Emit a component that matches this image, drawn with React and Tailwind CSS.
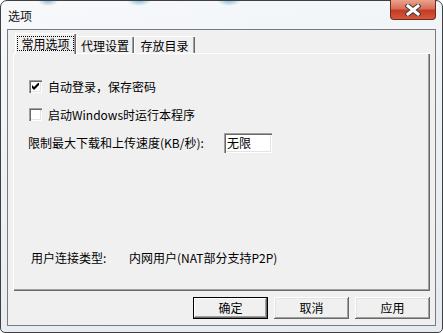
function CheckBox({ checked }) {
  return (
    <span className="flex h-[13px] w-[13px] shrink-0 items-center justify-center bg-white shadow-[inset_1px_1px_#a0a0a0,inset_2px_2px_#696969,inset_-1px_-1px_#fff,inset_-2px_-2px_#e3e3e3]">
      {checked && (
        <svg width="7" height="7" viewBox="0 0 7 7">
          <path d="M0 2v3l2 2 5-5V-1L2 4z" fill="#000" />
        </svg>
      )}
    </span>
  );
}

function Button({ label, primary }) {
  return (
    <button
      className={`flex h-[22px] w-[75px] items-center justify-center bg-[#f0f0f0] leading-[12px] ${
        primary
          ? 'border border-black shadow-[inset_-1px_-1px_#696969,inset_1px_1px_#fff,inset_-2px_-2px_#a0a0a0]'
          : 'shadow-[inset_-1px_-1px_#696969,inset_1px_1px_#fff,inset_-2px_-2px_#a0a0a0,inset_2px_2px_#e3e3e3]'
      }`}
    >
      {label}
    </button>
  );
}

export default function App() {
  return (
    <div className="h-[333px] w-[443px] font-['Noto_Sans_CJK_SC',sans-serif] text-[12px] text-black">
      <div className="flex h-full flex-col rounded-t-[7px] rounded-b-[5px] border border-[#3f3f3f] bg-[radial-gradient(ellipse_10px_5px_at_47px_0px,#8cc0dc,transparent),radial-gradient(ellipse_12px_5px_at_138px_0px,#8cc0dc,transparent),radial-gradient(ellipse_12px_5px_at_228px_0px,#8cc0dc,transparent),linear-gradient(170deg,#f7f9fb_0%,#eef2f6_40%,#e4eaf0_100%)] px-[6px] pb-[6px]">
        {/* title bar */}
        <div className="flex h-[28px] items-start justify-between">
          <div className="pl-[1px] pt-[9px] leading-[12px] text-[#111]">选项</div>
          <div className="-mt-[1px] flex h-[20px] w-[46px] items-center justify-center rounded-b-[4px] border border-t-0 border-[#6b2a1e] bg-[linear-gradient(#eba28c_0%,#d8705a_45%,#c43c24_55%,#d4583c_100%)]">
            <svg width="16" height="12" viewBox="0 0 16 12">
              <path d="M3 2l10 8M13 2L3 10" stroke="#3b3b3b" strokeWidth="5" strokeLinecap="square" />
              <path d="M3 2l10 8M13 2L3 10" stroke="#fff" strokeWidth="3" strokeLinecap="square" />
            </svg>
          </div>
        </div>

        {/* client area */}
        <div className="flex flex-1 flex-col border border-[#7a7a7a] bg-[#f0f0f0] px-[5px] pt-[3px]">
          {/* tabs */}
          <div className="relative z-10 flex items-end pl-[2px]">
            <div className="-mb-[1px] flex h-[21px] w-[61px] items-start justify-center bg-[#f0f0f0] pt-[3px] shadow-[inset_1px_1px_#fff,inset_-1px_0_#696969,inset_-2px_0_#a0a0a0]">
              <span className="border border-dotted border-black px-[3px] leading-[13px]">常用选项</span>
            </div>
            <div className="flex h-[17px] w-[58px] items-start justify-center pt-[3px] shadow-[inset_1px_1px_#fff,inset_-1px_0_#696969,inset_-2px_0_#a0a0a0]">
              <span className="leading-[13px]">代理设置</span>
            </div>
            <div className="flex h-[17px] w-[61px] items-start justify-center pt-[3px] shadow-[inset_1px_1px_#fff,inset_-1px_0_#696969,inset_-2px_0_#a0a0a0]">
              <span className="leading-[13px]">存放目录</span>
            </div>
          </div>

          {/* panel */}
          <div className="flex h-[238px] flex-col pl-[16px] pt-[27px] shadow-[inset_1px_1px_#fff,inset_-1px_-1px_#696969,inset_-2px_-2px_#a0a0a0]">
            <div className="flex h-[13px] items-center gap-[6px]">
              <CheckBox checked />
              <span className="leading-[12px]">自动登录，保存密码</span>
            </div>
            <div className="mt-[15px] flex h-[13px] items-center gap-[6px]">
              <CheckBox />
              <span className="leading-[12px]">启动Windows时运行本程序</span>
            </div>
            <div className="-ml-[1px] mt-[12px] flex h-[20px] items-center">
              <span className="w-[196px] leading-[12px]">限制最大下载和上传速度(KB/秒):</span>
              <div className="flex h-[20px] w-[48px] items-center bg-white pl-[3px] leading-[12px] shadow-[inset_1px_1px_#a0a0a0,inset_2px_2px_#696969,inset_-1px_-1px_#fff,inset_-2px_-2px_#e3e3e3]">
                无限
              </div>
            </div>
            <div className="ml-[2px] mt-[99px] flex leading-[12px]">
              <span className="w-[98px]">用户连接类型:</span>
              <span>内网用户(NAT部分支持P2P)</span>
            </div>
          </div>

          {/* buttons */}
          <div className="mt-[6px] flex justify-end gap-[6px]">
            <Button label="确定" primary />
            <Button label="取消" />
            <Button label="应用" />
          </div>
        </div>
      </div>
    </div>
  );
}
